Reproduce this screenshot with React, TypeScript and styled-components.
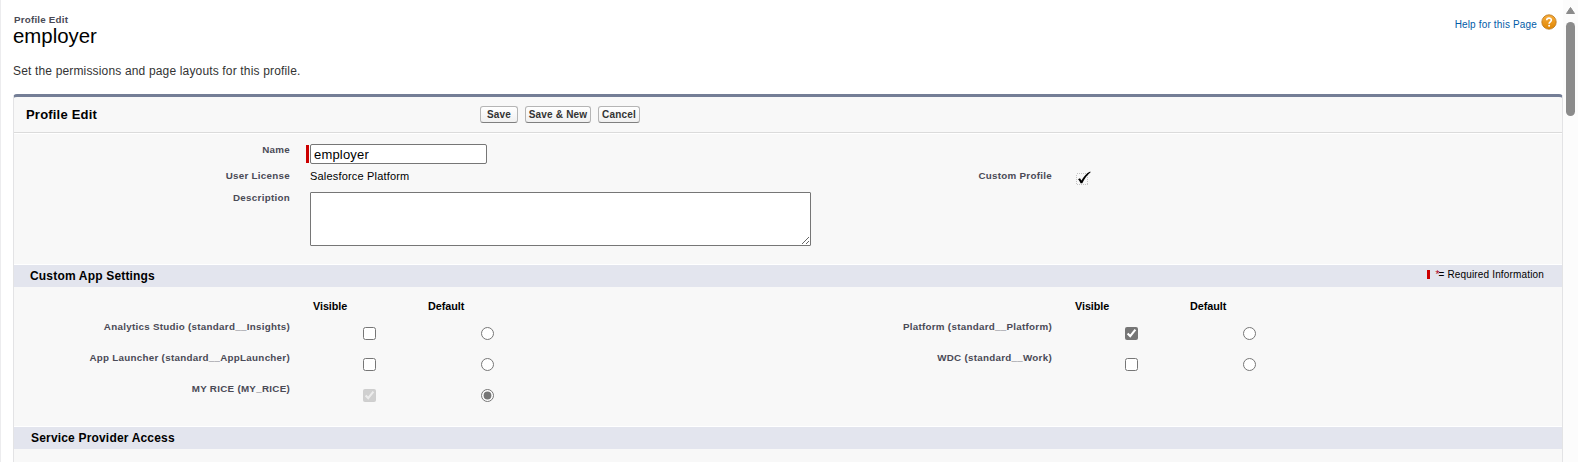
import React from "react";
import styled, { createGlobalStyle } from "styled-components";

const GlobalStyle = createGlobalStyle`
  * { box-sizing: border-box; }
  html, body { margin: 0; padding: 0; overflow: hidden; background: #fff; }
  body, input, textarea, button { font-family: "Liberation Sans", Arial, sans-serif; }
`;

const Page = styled.div`
  display: flex;
  width: 1581px;
  height: 462px;
  overflow: hidden;
  border-left: 1px solid #ececee;
  color: #000;
`;

const Main = styled.main`
  width: 1562px;
  padding-left: 12px;
`;

const PageHeader = styled.header`
  display: flex;
  justify-content: space-between;
  height: 94px;
  padding-right: 6px;
`;

const Eyebrow = styled.div`
  margin: 14px 0 0 1px;
  font-size: 9.8px;
  font-weight: bold;
  line-height: 12px;
  letter-spacing: 0.2px;
  color: #4a4a56;
`;

const Title = styled.h1`
  margin: -2px 0 0;
  font-size: 20.4px;
  font-weight: normal;
  line-height: 24px;
`;

const Intro = styled.p`
  margin: 15px 0 0;
  font-size: 12px;
  line-height: 16px;
  letter-spacing: 0.16px;
  color: #333;
`;

const HelpLink = styled.a`
  display: flex;
  align-items: center;
  height: 18px;
  margin-top: 13px;
  font-size: 10px;
  letter-spacing: 0.16px;
  color: #015ba7;
  svg { margin: 0 0 0 4px; }
  span { padding-top: 5px; }
`;

const Panel = styled.section`
  width: 1550px;
  height: 380px;
  border: 1px solid #e3e3e5;
  border-top: 3px solid #747e96;
  border-radius: 4px 4px 0 0;
  background: #f8f8f8;
`;

const Toolbar = styled.div`
  display: flex;
  align-items: center;
  height: 36px;
  padding-left: 12px;
  border-bottom: 1px solid #dbdbdb;
`;

const PanelTitle = styled.h2`
  width: 454px;
  margin: 0;
  font-size: 13px;
  letter-spacing: 0.2px;
`;

const Button = styled.button<{ $width: number }>`
  width: ${(p) => p.$width}px;
  height: 17px;
  margin-right: 7px;
  padding: 0;
  border: 1px solid #b5b5b5;
  border-bottom-color: #7f7f7f;
  border-radius: 3px;
  background: linear-gradient(#fff, #f0f0f0);
  font-size: 10px;
  font-weight: bold;
  line-height: 14px;
  white-space: nowrap;
  letter-spacing: 0.2px;
  color: #333;
`;

const Fields = styled.div`
  height: 131px;
  padding-top: 10px;
  border-top: 1px solid #fff;
`;

const FieldRow = styled.div<{ $height: number }>`
  display: grid;
  grid-template-columns: 276px 486px 276px 1fr;
  height: ${(p) => p.$height}px;
`;

const Label = styled.label<{ $offset?: number }>`
  padding-top: ${(p) => p.$offset ?? 0}px;
  text-align: right;
  white-space: nowrap;
  font-size: 9.8px;
  font-weight: bold;
  line-height: 12px;
  letter-spacing: 0.28px;
  color: #4a4a56;
`;

const RequiredField = styled.div`
  display: flex;
  gap: 1px;
  padding-left: 16px;
  &::before { content: ""; width: 3px; height: 18px; margin-top: 1px; background: #c00; }
`;

const TextInput = styled.input`
  width: 177px;
  height: 20px;
  padding: 0 3px;
  border: 1px solid #767676;
  border-radius: 2px;
  background: #fff;
  font-size: 13px;
  letter-spacing: 0.18px;
  color: #000;
`;

const Value = styled.div`
  padding: 0 0 0 20px;
  font-size: 11px;
  line-height: 13px;
  letter-spacing: 0.18px;
`;

const Description = styled.textarea`
  display: block;
  width: 501px;
  height: 54px;
  margin-left: 20px;
  border: 1px solid #767676;
  border-radius: 1px;
  background: #fff;
`;

const CheckCell = styled.div`
  padding: 1px 0 0 23px;
  svg { display: block; }
`;

const SectionBar = styled.div<{ $indent: number }>`
  display: flex;
  justify-content: space-between;
  align-items: center;
  height: 23px;
  padding: 0 18px 0 ${(p) => p.$indent}px;
  border-top: 1px solid #fff;
  background: #e3e5ee;
`;

const SectionTitle = styled.h3`
  margin: 0;
  padding-bottom: 1px;
  font-size: 12px;
  line-height: 16px;
  letter-spacing: 0.18px;
`;

const Legend = styled.div`
  display: flex;
  align-items: center;
  padding-bottom: 3px;
  font-size: 10px;
  line-height: 12px;
  letter-spacing: 0.16px;
  &::before { content: ""; width: 3px; height: 9px; margin-right: 5px; background: #c00; }
`;

const Star = styled.span`
  width: 3px;
  color: #b00020;
`;

const AppSettings = styled.div`
  height: 139px;
  padding-top: 12px;
`;

const Row = styled.div<{ $height: number }>`
  display: grid;
  grid-template-columns: 276px 118px 368px 276px 118px 1fr;
  height: ${(p) => p.$height}px;
`;

const ColumnHead = styled.div`
  padding-left: 23px;
  font-size: 10.8px;
  font-weight: bold;
  line-height: 14px;
  letter-spacing: -0.06px;
`;

const DefaultHead = styled(ColumnHead)`
  padding-left: 20px;
`;

const Choice = styled.input`
  display: block;
  width: 13px;
  height: 13px;
  margin: 8px 0 0 73px;
  accent-color: #767676;
`;

const Scrollbar = styled.aside`
  display: flex;
  flex-direction: column;
  align-items: center;
  width: 15px;
  height: 462px;
  padding-top: 7px;
  background: #fcfcfc;
`;

const Thumb = styled.div`
  width: 9px;
  height: 94px;
  margin-top: 8px;
  border-radius: 5px;
  background: #8b8b8b;
`;

const HelpIcon = () => (
  <svg width="16" height="16" viewBox="0 0 16 16">
    <defs>
      <linearGradient id="amber" x1="0" y1="0" x2="0" y2="1">
        <stop offset="0" stopColor="#f7ad3d" />
        <stop offset="1" stopColor="#df8500" />
      </linearGradient>
    </defs>
    <circle cx="8" cy="8" r="7.2" fill="url(#amber)" stroke="#b9751b" strokeWidth=".8" />
    <path d="M5.7 6.2C5.8 3.4 10.4 3.4 10.4 6.1C10.4 7.9 8.1 7.8 8.1 9.8" fill="none" stroke="#fff" strokeWidth="1.6" />
    <circle cx="8.1" cy="11.8" r="1" fill="#fff" />
  </svg>
);

const ProfileCheck = () => (
  <svg width="16" height="15" viewBox="0 0 16 15">
    <rect x="1.5" y="2.5" width="11" height="11" fill="none" stroke="#c4c4c4" strokeDasharray="1 1" shapeRendering="crispEdges" />
    <path d="M3 8.2L5 7.2L6.4 9.5C8.7 5.7 11.4 2.4 15.2.6L15.6 1.3C12.2 4 9.5 7.8 7.3 12.2L5.6 12.3C5 10.7 4 9 3 8.2Z" fill="#000" />
  </svg>
);

type App = { name: string; visible?: boolean; locked?: boolean; chosen?: boolean };

const rows: App[][] = [
  [{ name: "Analytics Studio (standard__Insights)" }, { name: "Platform (standard__Platform)", visible: true }],
  [{ name: "App Launcher (standard__AppLauncher)" }, { name: "WDC (standard__Work)" }],
  [{ name: "MY RICE (MY_RICE)", visible: true, locked: true, chosen: true }],
];

const AppCells = ({ app }: { app: App }) => (
  <>
    <Label $offset={2}>{app.name}</Label>
    <Choice type="checkbox" defaultChecked={app.visible} disabled={app.locked} />
    <Choice type="radio" name="default-app" defaultChecked={app.chosen} />
  </>
);

export default function App() {
  return (
    <>
      <GlobalStyle />
      <Page>
        <Main>
          <PageHeader>
            <div>
              <Eyebrow>Profile Edit</Eyebrow>
              <Title>employer</Title>
              <Intro>Set the permissions and page layouts for this profile.</Intro>
            </div>
            <HelpLink><span>Help for this Page</span><HelpIcon /></HelpLink>
          </PageHeader>
          <Panel>
            <Toolbar>
              <PanelTitle>Profile Edit</PanelTitle>
              <Button $width={38}>Save</Button>
              <Button $width={66}>Save &amp; New</Button>
              <Button $width={42}>Cancel</Button>
            </Toolbar>
            <Fields>
              <FieldRow $height={26}>
                <Label>Name</Label>
                <RequiredField><TextInput defaultValue="employer" /></RequiredField>
              </FieldRow>
              <FieldRow $height={22}>
                <Label>User License</Label>
                <Value>Salesforce Platform</Value>
                <Label>Custom Profile</Label>
                <CheckCell><ProfileCheck /></CheckCell>
              </FieldRow>
              <FieldRow $height={54}>
                <Label>Description</Label>
                <Description />
              </FieldRow>
            </Fields>
            <SectionBar $indent={16}>
              <SectionTitle>Custom App Settings</SectionTitle>
              <Legend><Star>*</Star>= Required Information</Legend>
            </SectionBar>
            <AppSettings>
              <Row $height={20}>
                <span />
                <ColumnHead>Visible</ColumnHead>
                <DefaultHead>Default</DefaultHead>
                <span />
                <ColumnHead>Visible</ColumnHead>
                <DefaultHead>Default</DefaultHead>
              </Row>
              {rows.map((apps) => (
                <Row $height={31} key={apps[0].name}>
                  {apps.map((app) => <AppCells app={app} key={app.name} />)}
                </Row>
              ))}
            </AppSettings>
            <SectionBar $indent={17}>
              <SectionTitle>Service Provider Access</SectionTitle>
            </SectionBar>
          </Panel>
        </Main>
        <Scrollbar>
          <svg width="9" height="7" viewBox="0 0 9 7">
            <path d="M4.5.5L8.5 6.5H.5Z" fill="#8b8b8b" stroke="#8b8b8b" strokeLinejoin="round" />
          </svg>
          <Thumb />
        </Scrollbar>
      </Page>
    </>
  );
}
